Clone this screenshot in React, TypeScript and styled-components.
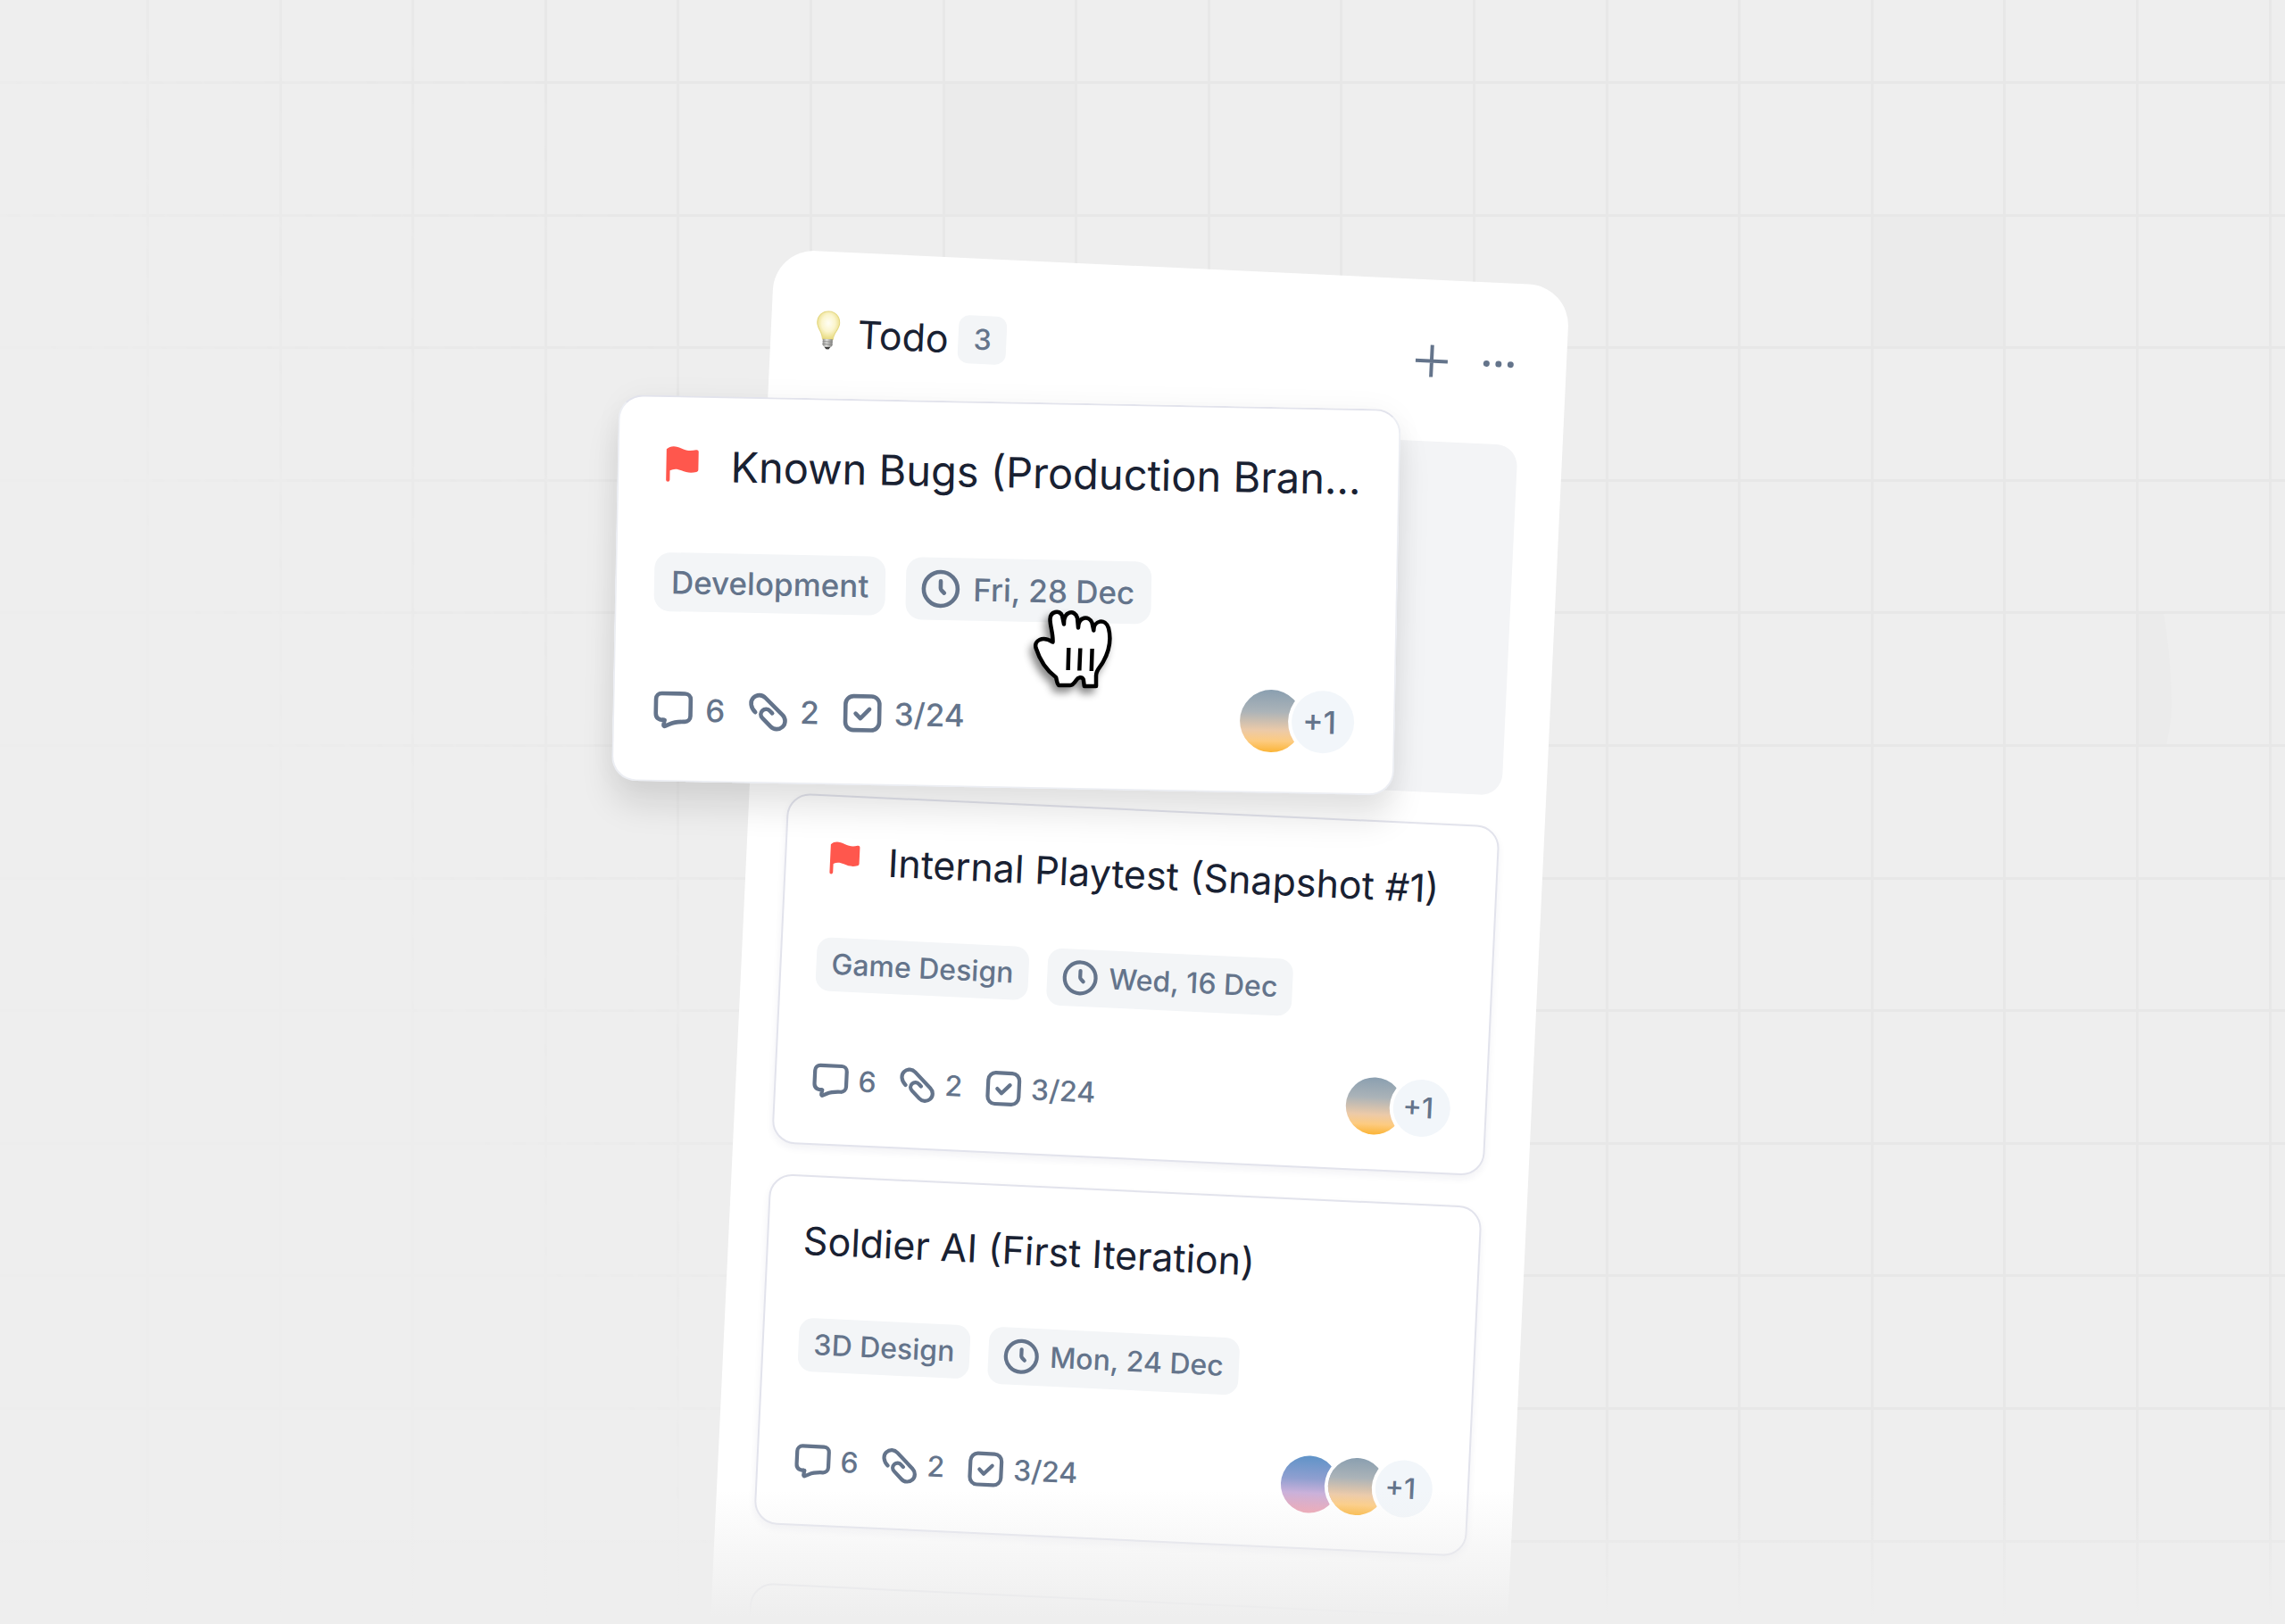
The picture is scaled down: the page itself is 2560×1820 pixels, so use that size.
import React from "react";
import styled, { createGlobalStyle, css } from "styled-components";

const GlobalStyle = createGlobalStyle`
  * { box-sizing: border-box; }
  body {
    margin: 0;
    background: #eeeeee;
    font-family: Inter, "Liberation Sans", sans-serif;
  }
`;

const Stage = styled.main`
  position: relative;
  height: 100vh;
  overflow: hidden;
  background: #eeeeee;
`;

const Backdrop = styled.svg`
  position: absolute;
  inset: 0;
  width: 100%;
  height: 100%;
`;

const Column = styled.section`
  position: absolute;
  left: 868px;
  top: 279px;
  width: 892px;
  padding: 0 50px 400px 43px;
  border-radius: 46px;
  background: #ffffff;
  transform: rotate(2.68deg);
  transform-origin: 0 0;
`;

const ColumnHeader = styled.header`
  display: flex;
  align-items: center;
  height: 181px;
  padding: 0 2px 0 7px;
`;

const ColumnTitle = styled.h2`
  margin: 0 11px 0 19px;
  font-size: 43px;
  line-height: 52px;
  font-weight: 400;
  color: #192132;
`;

const CountBadge = styled.span`
  width: 54px;
  border-radius: 12px;
  background: #f3f5f7;
  font-size: 32px;
  line-height: 54px;
  font-weight: 500;
  text-align: center;
  color: #64748b;
`;

const HeaderActions = styled.div`
  display: flex;
  gap: 27px;
  margin-left: auto;
`;

const IconButton = styled.button`
  display: flex;
  padding: 0;
  border: 0;
  background: none;
  color: #64748b;
`;

const CardList = styled.div`
  display: flex;
  flex-direction: column;
  gap: 34px;
`;

const DropSlot = styled.div`
  height: 393px;
  border-radius: 24px;
  background: #f3f4f6;
`;

const restingSizes = css`
  --pad: 39px;
  --radius: 26px;
  --row: 64px;
  --title: 43px;
  --label: 32px;
  --tag-gap: 21px;
  --tag-pad: 17px;
  --tag-line: 60px;
  --tag-radius: 16px;
  --tag-top: 55px;
  --date-gap: 10px;
  --stats-top: 64px;
  --stat-gap: 9px;
  --icon: 44px;
  --flag: 50px;
  --title-gap: 25px;
  --overlap: -11px;
`;

const liftedSizes = css`
  --pad: 42px;
  --radius: 28px;
  --row: 70px;
  --title: 47px;
  --label: 35px;
  --tag-gap: 23px;
  --tag-pad: 19px;
  --tag-line: 66px;
  --tag-radius: 18px;
  --tag-top: 62px;
  --date-gap: 12px;
  --stats-top: 71px;
  --stat-gap: 12px;
  --icon: 48px;
  --flag: 55px;
  --title-gap: 28px;
  --overlap: -12px;
`;

const Card = styled.article<{ $lifted?: boolean }>`
  ${(p) => (p.$lifted ? liftedSizes : restingSizes)}
  padding: var(--pad);
  border: 2px solid #e2e3ec;
  border-radius: var(--radius);
  background: #ffffff;
  box-shadow: 0 4px 8px rgba(30, 41, 90, 0.06);
  ${(p) =>
    p.$lifted &&
    css`
      position: absolute;
      left: 693px;
      top: 442px;
      width: 877px;
      padding-right: 44px;
      padding-bottom: 44px;
      border-color: #e2e3ec #eceef3 #eceef3 #eceef3;
      transform: rotate(1.1deg);
      transform-origin: 0 0;
      box-shadow: 0 28px 36px rgba(0, 0, 0, 0.1), 0 0 32px rgba(0, 0, 0, 0.04);
    `}
`;

const TitleRow = styled.div`
  display: flex;
  align-items: center;
  gap: var(--title-gap);
  height: var(--row);
`;

const CardTitle = styled.h3`
  margin: 0;
  font-size: var(--title);
  line-height: var(--row);
  font-weight: 400;
  white-space: nowrap;
  color: #192132;
`;

const TagRow = styled.div`
  display: flex;
  align-items: flex-start;
  gap: var(--tag-gap);
  height: var(--row);
  margin-top: var(--tag-top);
`;

const Tag = styled.span`
  padding: 0 var(--tag-pad);
  border-radius: var(--tag-radius);
  background: #f3f5f7;
  font-size: var(--label);
  line-height: var(--tag-line);
  font-weight: 500;
  white-space: nowrap;
  color: #64748b;
`;

const DateTag = styled(Tag).attrs({ as: "time" })`
  display: flex;
  align-items: center;
  gap: var(--date-gap);
  padding-left: 15px;
  line-height: var(--row);
`;

const MetaRow = styled.footer`
  display: flex;
  align-items: center;
  justify-content: space-between;
  height: var(--row);
  margin-top: var(--stats-top);
`;

const Stats = styled.ul`
  display: flex;
  gap: 24px;
  margin: 0;
  padding: 0;
  list-style: none;
`;

const Stat = styled.li`
  display: flex;
  align-items: center;
  gap: var(--stat-gap);
  font-size: var(--label);
  line-height: var(--icon);
  font-weight: 500;
  color: #64748b;
`;

const Avatars = styled.div`
  display: flex;
`;

const skies = {
  dawn: "linear-gradient(#5f93c8 0%, #8f9fd0 40%, #c9b0da 65%, #ec9fae 100%)",
  dusk: "linear-gradient(#8a9fb0 0%, #abb3b8 35%, #eccaa8 65%, #fdcb80 82%, #fbb436 100%)",
};

const disc = css`
  width: var(--row);
  height: var(--row);
  border-radius: 50%;
  box-shadow: 0 0 0 4px #ffffff;
`;

const Avatar = styled.span<{ $sky: keyof typeof skies }>`
  ${disc}
  margin-right: var(--overlap);
  background: ${(p) => skies[p.$sky]};
`;

const MoreAvatar = styled.span`
  ${disc}
  padding-right: 8px;
  background: #f2f6fa;
  font-size: var(--label);
  line-height: var(--row);
  font-weight: 500;
  text-align: center;
  color: #64748b;
`;

const LineIcon = styled.svg`
  flex: none;
  width: var(--icon);
  height: var(--icon);
  fill: none;
  stroke: currentColor;
  stroke-width: 2.3;
  stroke-linecap: round;
  stroke-linejoin: round;
`;

const FlagIcon = styled.svg`
  flex: none;
  width: var(--flag);
  height: var(--flag);
`;

const GrabCursor = styled.svg`
  position: absolute;
  left: 1148px;
  top: 674px;
  width: 108px;
  height: 108px;
  filter: drop-shadow(-4px 6px 4px rgba(0, 0, 0, 0.45));
`;

const BottomFade = styled.div`
  position: absolute;
  inset: auto 0 0 0;
  height: 150px;
  background: linear-gradient(rgba(238, 238, 238, 0), #eeeeee 95%);
`;

const PITCH = 148.6;

function Grid() {
  const at = (start: number, count: number) =>
    Array.from({ length: count }, (_, i) => Math.round(start + i * PITCH));
  return (
    <Backdrop aria-hidden="true">
      <defs>
        <linearGradient id="fadeStops" gradientUnits="userSpaceOnUse" x1="60" y1="400" x2="620" y2="95">
          <stop offset="0" stopColor="#fff" stopOpacity="0.1" />
          <stop offset="0.5" stopColor="#fff" stopOpacity="0.6" />
          <stop offset="1" stopColor="#fff" stopOpacity="1" />
        </linearGradient>
        <mask id="gridFade">
          <rect width="100%" height="100%" fill="url(#fadeStops)" />
        </mask>
      </defs>
      <g mask="url(#gridFade)">
        <rect x="1058" y="92" width="148" height="148" fill="#ebebeb" />
        <rect x="2098" y="240" width="148" height="148" fill="#ebebeb" />
        <path d="M2395 687h29c5 30 8 60 9 100 0 20-3 35-6 48h-32Z" fill="#ebebeb" />
        {at(164, 17).map((x) => (
          <rect key={x} x={x} y="0" width="3" height="100%" fill="#e7e7e7" />
        ))}
        {at(91, 12).map((y) => (
          <rect key={y} x="0" y={y} width="100%" height="3" fill="#e7e7e7" />
        ))}
      </g>
    </Backdrop>
  );
}

function Bulb() {
  return (
    <svg width="28" height="50" viewBox="0 0 28 50" aria-hidden="true">
      <defs>
        <radialGradient id="glass" cx="0.5" cy="0.42" r="0.6">
          <stop offset="0" stopColor="#fffef4" />
          <stop offset="0.5" stopColor="#fbf5cd" />
          <stop offset="1" stopColor="#e6d877" />
        </radialGradient>
        <linearGradient id="metal" x1="0" x2="1">
          <stop offset="0" stopColor="#8e8e8c" />
          <stop offset="0.4" stopColor="#e2e2e0" />
          <stop offset="1" stopColor="#7d7d7b" />
        </linearGradient>
      </defs>
      <path d="M14 1C6.600 1 1.500 6.600 1.500 13.500c0 5 2.600 8 4.500 11.500 1.200 2.300 1.800 5 2.200 7.500h11.600c.4-2.500 1-5.200 2.200-7.500 1.900-3.500 4.500-6.500 4.500-11.500C26.500 6.600 21.400 1 14 1Z" fill="url(#glass)" stroke="#e3d67f" />
      <path d="M8.500 32h11v6.500c0 1-1 2-2.500 2.500h-6c-1.500-.5-2.500-1.500-2.500-2.500Z" fill="url(#metal)" />
      <path d="M8.500 35h11M8.500 38h11" stroke="#8a8a88" />
      <path d="M10.500 41h7l-2 2.500h-3Z" fill="#3d3d3d" />
    </svg>
  );
}

function Flag() {
  return (
    <FlagIcon viewBox="-1 4 50 50" aria-label="High priority" role="img">
      <path d="M9 11.500C13 7.500 19 8 24.500 10.700c5 2.300 9.500 2.300 14.500 1.100 1.500-.3 2.700.4 2.700 2v18c0 1.300-.6 2-1.900 2.400-5.300 1.500-10 1-15.300-1.200-4.300-1.800-8-1.800-11.700.2v9.600a1.900 1.900 0 0 1-3.800 0Z" fill="#ff574d" />
    </FlagIcon>
  );
}

function Clock() {
  return (
    <LineIcon viewBox="0 0 24 24" aria-hidden="true">
      <circle cx="12" cy="12" r="9.500" />
      <path d="M12 7.700v3.900c0 .5.200.9.500 1.200l1.500 1.500" />
    </LineIcon>
  );
}

function Comment() {
  return (
    <LineIcon viewBox="0 0 24 24" aria-hidden="true">
      <path d="M5.500 3h13a3.200 3.200 0 0 1 3.200 3.200v9.300a3.200 3.200 0 0 1-3.200 3.200c-3.800 0-6 .3-8.500 1.500l-2.300 1.100c-.6.300-1-.1-.9-.7l.4-2.600c-3 0-4.900-1-4.900-3.800v-8A3.200 3.200 0 0 1 5.500 3Z" />
      <path d="m7.200 18-.8-.2" />
    </LineIcon>
  );
}

function Link() {
  return (
    <LineIcon viewBox="0 0 24 24" aria-hidden="true">
      <path d="M5 12.600C2.300 10 1.800 6.600 3.800 4.500s4.900-1.900 6.800 0l9.600 9.300c2 1.900 2.100 4.900.2 6.700s-4.800 1.800-6.600 0l-4.700-4.600c-1.300-1.300-1.300-3.100-.1-4.300s3.100-1.100 4.200.1l1.300 1.300" />
    </LineIcon>
  );
}

function Check() {
  return (
    <LineIcon viewBox="0 0 24 24" aria-hidden="true">
      <rect x="2.500" y="2.500" width="19" height="19" rx="4.500" />
      <path d="m8.200 12.200 2.700 2.700 5-5.200" />
    </LineIcon>
  );
}

type Task = {
  title: string;
  tag: string;
  date: string;
  flagged?: boolean;
  avatars: (keyof typeof skies)[];
};

function TaskCard({ task, lifted }: { task: Task; lifted?: boolean }) {
  return (
    <Card $lifted={lifted}>
      <TitleRow>
        {task.flagged && <Flag />}
        <CardTitle>{task.title}</CardTitle>
      </TitleRow>
      <TagRow>
        <Tag>{task.tag}</Tag>
        <DateTag>
          <Clock />
          {task.date}
        </DateTag>
      </TagRow>
      <MetaRow>
        <Stats>
          <Stat><Comment />6</Stat>
          <Stat><Link />2</Stat>
          <Stat><Check />3/24</Stat>
        </Stats>
        <Avatars>
          {task.avatars.map((sky) => (
            <Avatar key={sky} $sky={sky} />
          ))}
          <MoreAvatar>+1</MoreAvatar>
        </Avatars>
      </MetaRow>
    </Card>
  );
}

const dragged: Task = {
  title: "Known Bugs (Production Bran…",
  tag: "Development",
  date: "Fri, 28 Dec",
  flagged: true,
  avatars: ["dusk"],
};

const tasks: Task[] = [
  { title: "Internal Playtest (Snapshot #1)", tag: "Game Design", date: "Wed, 16 Dec", flagged: true, avatars: ["dusk"] },
  { title: "Soldier AI (First Iteration)", tag: "3D Design", date: "Mon, 24 Dec", avatars: ["dawn", "dusk"] },
];

const NextCard = styled.div`
  height: 200px;
  margin-top: 32px;
  border: 2px solid #dfe0e8;
  border-radius: 26px;
`;

export default function App() {
  return (
    <Stage>
      <GlobalStyle />
      <Grid />
      <Column>
        <ColumnHeader>
          <Bulb />
          <ColumnTitle>Todo</ColumnTitle>
          <CountBadge>3</CountBadge>
          <HeaderActions>
            <IconButton aria-label="Add card">
              <svg width="48" height="48" viewBox="0 0 48 48" stroke="currentColor" strokeWidth="4">
                <path d="M24 6v36M6 24h36" />
              </svg>
            </IconButton>
            <IconButton aria-label="Column menu">
              <svg width="48" height="48" viewBox="0 0 48 48" fill="currentColor">
                <circle cx="10.500" cy="24" r="3.500" />
                <circle cx="24" cy="24" r="3.500" />
                <circle cx="37.500" cy="24" r="3.500" />
              </svg>
            </IconButton>
          </HeaderActions>
        </ColumnHeader>
        <CardList>
          <DropSlot />
          {tasks.map((task) => (
            <TaskCard key={task.title} task={task} />
          ))}
          <NextCard />
        </CardList>
      </Column>
      <BottomFade />
      <TaskCard task={dragged} lifted />
      <GrabCursor viewBox="0 0 108 108" aria-hidden="true">
        <path
          d="M31.500 45.500C32 36 28.500 28 28.500 20c0-9 11-11 13.500-4l2 9.500c-.5-15 12-17 15-7l1 11c0-13 12-14 15.500-5.500l1.800 8.500c-.3-11 13.200-14.500 16.700-2.500 3.500 14 .5 26-6 37.500-3 6-8 9-8 15.500v12H66.800l-1-7.500c-1.800-3.500-6-2.500-7.800.5-2 3-4 6-7 6H38.500c-2 0-2.500-6-3.500-9C24 77 17 66 12.500 52c-2-8 7-14 19-6.500Z"
          fill="#fff" stroke="#000" strokeWidth="4.500" strokeLinejoin="round"
        />
        <path d="M49.300 52l-.7 25M62.300 52.500l-1 25M75.600 53l-.8 25" stroke="#000" strokeWidth="4.500" />
      </GrabCursor>
    </Stage>
  );
}
